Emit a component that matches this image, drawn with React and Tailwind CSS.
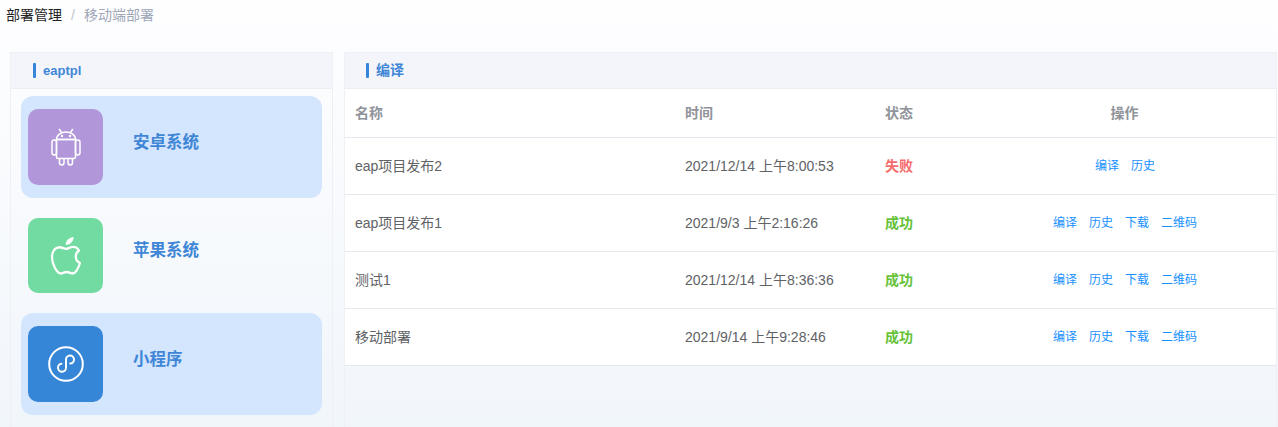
const rows = [
  { name: "eap项目发布2", time: "2021/12/14 上午8:00:53", ok: false },
  { name: "eap项目发布1", time: "2021/9/3 上午2:16:26", ok: true },
  { name: "测试1", time: "2021/12/14 上午8:36:36", ok: true },
  { name: "移动部署", time: "2021/9/14 上午9:28:46", ok: true },
];

function AndroidIcon() {
  return (
    <svg width="30" height="38" viewBox="0 0 30 38" fill="none" stroke="white" strokeWidth="1.5" strokeLinecap="round" strokeLinejoin="round">
      <path d="M8.5 1.5l2 3.2M21.5 1.5l-2 3.2" />
      <path d="M5.500 11.500c0-4.500 4.300-7.500 9.500-7.500s9.500 3 9.500 7.500z" />
      <path d="M5.500 11.500h19v17.500a1.500 1.500 0 0 1-1.500 1.500h-16a1.500 1.500 0 0 1-1.500-1.500z" />
      <rect x="1" y="12" width="4.500" height="15" rx="2.200" />
      <rect x="24.500" y="12" width="4.500" height="15" rx="2.200" />
      <path d="M8.500 30.500v4.200a2 2 0 0 0 4.500 0v-4.200M17 30.500v4.200a2 2 0 0 0 4.500 0v-4.200" />
      <circle cx="11" cy="8" r="0.500" />
      <circle cx="19" cy="8" r="0.500" />
    </svg>
  );
}

function AppleIcon() {
  return (
    <svg width="32" height="38" viewBox="0 0 32 38" fill="none" stroke="white" strokeWidth="2.2" strokeLinejoin="round">
      <path d="M23.500 0c.3 3.800-3 7.800-7.800 8 -.3-3.800 3-7.500 7.800-8z" fill="white" stroke="none" />
      <path
        transform="translate(0.500 -1) scale(1 1.120)"
        d="M15.500 11.500c2 0 4-1.800 7-1.800 2.500 0 4.800 1.200 6 3.300-4.800 2.800-4 9.300 1 11.200-1.500 4-4.500 9.300-7.500 9.300-2 0-3-1.300-5.800-1.300s-4 1.300-5.800 1.300c-3.800 0-8.900-8-8.900-14.500 0-6 3.800-9 7.600-9 2.600 0 4.400 1.500 6.400 1.500z"
      />
    </svg>
  );
}

function MiniProgramIcon() {
  return (
    <svg width="36" height="36" viewBox="0 0 36 36" fill="none" stroke="white" strokeWidth="2" strokeLinecap="round">
      <circle cx="18" cy="18" r="16.800" />
      <path d="M13.500 17.700a4 4 0 1 0 4.500 4V13.500a4 4 0 1 1 4.200 4" />
    </svg>
  );
}

const systems = [
  { label: "安卓系统", color: "bg-[#b197d9]", height: "h-[76px]", active: true, icon: <AndroidIcon /> },
  { label: "苹果系统", color: "bg-[#72dba1]", height: "h-[75px]", active: false, icon: <AppleIcon /> },
  { label: "小程序", color: "bg-[#3586d6]", height: "h-[76px]", active: true, icon: <MiniProgramIcon /> },
];

function PanelHeader({ title, inset, size }) {
  return (
    <div className={`h-[36px] bg-[#f3f5fa] border-b border-[#eceef3] flex items-center shrink-0 ${inset}`}>
      <span className="w-[3px] h-[15px] bg-[#3586d6] rounded-[1px] mr-[7px]"></span>
      <span className={`font-bold text-[#3f86d6] ${size}`}>{title}</span>
    </div>
  );
}

const rowGrid = "grid grid-cols-[330px_200px_120px_1fr] items-center pl-[10px] border-b border-[#e3e8ef] bg-white";

export default function App() {
  return (
    <div
      className="h-[427px] w-[1278px] overflow-hidden bg-gradient-to-b from-[#fefeff] to-[#f1f6fb] text-[14px]"
      style={{ fontFamily: '"Liberation Sans", "Noto Sans CJK SC", sans-serif' }}
    >
      {/* Breadcrumb */}
      <div className="h-[52px] pl-[6px] pt-[6px] text-[14px] leading-[18px] flex">
        <span className="text-[#1f1f1f]">部署管理</span>
        <span className="text-[#c0c4cc] mx-[9px]">/</span>
        <span className="text-[#a0a8b8]">移动端部署</span>
      </div>

      <div className="flex pl-[10px] gap-[11px]">
        {/* Left panel */}
        <div className="w-[323px] h-[375px] border-x border-t border-[#eef0f4] flex flex-col">
          <PanelHeader title="eaptpl" inset="pl-[22px]" size="text-[13px]" />
          <div className="px-[10px] pt-[7px] flex flex-col gap-[6.5px]">
            {systems.map((s) => (
              <div
                key={s.label}
                className={`h-[102px] shrink-0 rounded-[12px] pl-[7px] flex items-center ${s.active ? "bg-[#d4e5fe]" : ""}`}
              >
                <div className={`w-[75px] rounded-[10px] flex items-center justify-center ${s.height} ${s.color}`}>
                  {s.icon}
                </div>
                <span className="ml-[30px] text-[16.5px] font-bold text-[#3f86d6] -mt-[10px]">{s.label}</span>
              </div>
            ))}
          </div>
        </div>

        {/* Right panel */}
        <div className="w-[933px] h-[375px] border-x border-t border-[#eef0f4] flex flex-col">
          <PanelHeader title="编译" inset="pl-[21px]" size="text-[14px]" />
          <div className={`${rowGrid} h-[49px] text-[14px] font-bold text-[#909399]`}>
            <span>名称</span>
            <span>时间</span>
            <span>状态</span>
            <span className="text-center pr-[32px]">操作</span>
          </div>
          {rows.map((r) => (
            <div key={r.name} className={`${rowGrid} h-[57px] text-[#606266]`}>
              <span>{r.name}</span>
              <span>{r.time}</span>
              <span className={`text-[14px] font-bold ${r.ok ? "text-[#67c23a]" : "text-[#f56c6c]"}`}>
                {r.ok ? "成功" : "失败"}
              </span>
              <div className="flex justify-center gap-[12px] pr-[31px] text-[12px] text-[#1890ff]">
                <span>编译</span>
                <span>历史</span>
                {r.ok && <span>下载</span>}
                {r.ok && <span>二维码</span>}
              </div>
            </div>
          ))}
        </div>
      </div>
    </div>
  );
}
